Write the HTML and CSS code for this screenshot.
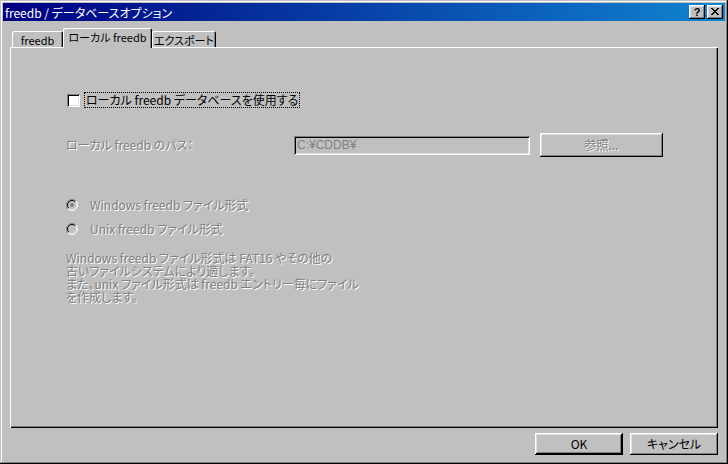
FILE: index.html
```html
<!DOCTYPE html>
<html lang="ja">
<head>
<meta charset="utf-8">
<title>freedb / データベースオプション</title>
<link rel="stylesheet" href="styles.css">
</head>
<body>
<div class="window">
  <div class="titlebar">
    <span class="title">freedb / データベースオプション</span>
    <div class="title-btns">
      <div class="tbtn help">?</div>
      <div class="tbtn">
        <svg width="8" height="7" viewBox="0 0 8 7" shape-rendering="crispEdges"><path fill="#000" d="M0 0h2v1H0z M6 0h2v1H6z M1 1h2v1H1z M5 1h2v1H5z M2 2h4v1H2z M3 3h2v1H3z M2 4h4v1H2z M1 5h2v1H1z M5 5h2v1H5z M0 6h2v1H0z M6 6h2v1H6z"/></svg>
      </div>
    </div>
  </div>
  <div class="body">
    <div class="tabs">
      <div class="tab t1">freedb</div>
      <div class="tab active t2">ローカル freedb</div>
      <div class="tab t3">エクスポート</div>
    </div>
    <div class="panel">
      <div class="row check-row">
        <span class="checkbox"></span>
        <span class="focus-label">ローカル freedb データベースを使用する</span>
      </div>
      <div class="row path-row">
        <span class="path-label disabled">ローカル freedb のパス：</span>
        <span class="edit">C:¥CDDB¥</span>
        <span class="btn browse"><span class="disabled">参照...</span></span>
      </div>
      <div class="row radio-row r1">
        <svg class="radio" width="12" height="12" viewBox="0 0 12 12">
          <circle cx="6" cy="6" r="4.5" fill="#c0c0c0"/>
          <path d="M2.1 9.9A5.5 5.5 0 0 1 9.9 2.1" fill="none" stroke="#808080"/>
          <path d="M9.9 2.1A5.5 5.5 0 0 1 2.1 9.9" fill="none" stroke="#fff"/>
          <path d="M2.8 9.2A4.5 4.5 0 0 1 9.2 2.8" fill="none" stroke="#000"/>
          <path d="M9.2 2.8A4.5 4.5 0 0 1 2.8 9.2" fill="none" stroke="#dfdfdf"/>
          <circle cx="6" cy="6" r="2" fill="#808080"/>
        </svg>
        <span class="radio-label disabled">Windows freedb ファイル形式</span>
      </div>
      <div class="row radio-row r2">
        <svg class="radio" width="12" height="12" viewBox="0 0 12 12">
          <circle cx="6" cy="6" r="4.5" fill="#c0c0c0"/>
          <path d="M2.1 9.9A5.5 5.5 0 0 1 9.9 2.1" fill="none" stroke="#808080"/>
          <path d="M9.9 2.1A5.5 5.5 0 0 1 2.1 9.9" fill="none" stroke="#fff"/>
          <path d="M2.8 9.2A4.5 4.5 0 0 1 9.2 2.8" fill="none" stroke="#000"/>
          <path d="M9.2 2.8A4.5 4.5 0 0 1 2.8 9.2" fill="none" stroke="#dfdfdf"/>
        </svg>
        <span class="radio-label disabled">Unix freedb ファイル形式</span>
      </div>
      <div class="desc disabled">
        <div class="line">Windows freedb ファイル形式は FAT16 やその他の</div>
        <div class="line">古いファイルシステムにより適します。</div>
        <div class="line">また、unix ファイル形式は freedb エントリー毎にファイル</div>
        <div class="line">を作成します。</div>
      </div>
    </div>
    <div class="buttons">
      <div class="btn default">OK</div>
      <div class="btn">キャンセル</div>
    </div>
  </div>
</div>
</body>
</html>
```
FILE: styles.css
```css
* { box-sizing: border-box; }
html, body {
  margin: 0;
  padding: 0;
  background: #c0c0c0;
}
body {
  font-family: "MS UI Gothic", "Noto Sans CJK JP", sans-serif;
  font-size: 12px;
  font-feature-settings: "palt";
  color: #000;
}
.window {
  width: 728px;
  height: 464px;
  padding: 3px;
  background: #c0c0c0;
  box-shadow: inset -1px -1px #000, inset 1px 1px #c0c0c0, inset -2px -2px #808080, inset 2px 2px #fff;
  display: flex;
  flex-direction: column;
}
.titlebar {
  height: 18px;
  background: linear-gradient(to right, #000080, #1084d0);
  display: flex;
  align-items: center;
  justify-content: space-between;
  padding: 0 2px 0 2px;
}
.title {
  color: #fff;
  line-height: 18px;
  white-space: nowrap;
  padding-top: 1px;
}
.title-btns {
  display: flex;
  gap: 2px;
}
.tbtn {
  width: 16px;
  height: 14px;
  background: #c0c0c0;
  box-shadow: inset -1px -1px #000, inset 1px 1px #fff, inset -2px -2px #808080, inset 2px 2px #dfdfdf;
  display: flex;
  align-items: center;
  justify-content: center;
  padding: 0 1px 1px 0;
}
.tbtn.help {
  font-family: "Liberation Sans", Arial, sans-serif;
  font-weight: bold;
  font-size: 11px;
  line-height: 13px;
  padding: 0;
}
.body {
  flex: 1;
  padding: 7px 7px 6px 7px;
  display: flex;
  flex-direction: column;
}
.tabs {
  height: 19px;
  display: flex;
  align-items: flex-end;
  padding-left: 2px;
}
.tab {
  flex: none;
  height: 16px;
  background: #c0c0c0;
  border-radius: 2px 2px 0 0;
  box-shadow: inset 1px 1px #fff, inset -1px 0 #000, inset -2px 0 #808080;
  display: flex;
  align-items: center;
  justify-content: center;
  white-space: nowrap;
  font-size: 11px;
  line-height: 14px;
  padding-top: 1px;
  overflow: hidden;
}
.t1 { width: 51px; }
.t2 { width: 89px; }
.t3 { width: 64px; }
.tab.active {
  height: 20px;
  margin-bottom: -1px;
  position: relative;
  z-index: 1;
  padding-bottom: 4px;
}
.panel {
  width: 708px;
  height: 381px;
  background: #c0c0c0;
  box-shadow: inset 1px 1px #fff, inset -1px -1px #000, inset -2px -2px #808080;
  padding-left: 56px;
  padding-top: 45px;
}
.row {
  display: flex;
  align-items: center;
  white-space: nowrap;
}
.disabled {
  color: #808080;
  text-shadow: 1px 1px 0 #fff;
}
.check-row {
  height: 16px;
  margin-left: 1px;
}
.checkbox {
  width: 13px;
  height: 13px;
  background: #fff;
  box-shadow: inset 1px 1px #808080, inset -1px -1px #fff, inset 2px 2px #000, inset -2px -2px #dfdfdf;
}
.focus-label {
  margin-left: 4px;
  height: 16px;
  line-height: 14px;
  padding: 0 2px;
  outline: 1px dotted #000;
  outline-offset: -1px;
  display: flex;
  align-items: center;
}
.path-row {
  height: 24px;
  margin-top: 25px;
}
.path-label {
  width: 228px;
  line-height: 14px;
}
.edit {
  width: 236px;
  height: 19px;
  padding: 1px 0 0 3px;
  color: #808080;
  line-height: 17px;
  font-family: "MS UI Gothic", "Liberation Sans", "Noto Sans CJK JP", sans-serif;
  box-shadow: inset 1px 1px #808080, inset -1px -1px #fff, inset 2px 2px #000, inset -2px -2px #dfdfdf;
}
.btn {
  background: #c0c0c0;
  box-shadow: inset -1px -1px #000, inset 1px 1px #fff, inset -2px -2px #808080, inset 2px 2px #dfdfdf;
  display: flex;
  align-items: center;
  justify-content: center;
  white-space: nowrap;
  line-height: 14px;
}
.browse {
  width: 123px;
  height: 24px;
  margin-left: 10px;
}
.radio-row {
  height: 16px;
}
.r1 { margin-top: 40px; }
.r2 { margin-top: 8px; }
.radio {
  display: block;
  flex: none;
}
.radio-label {
  margin-left: 12px;
  line-height: 14px;
}
.desc {
  margin-top: 14px;
  white-space: nowrap;
}
.desc .line {
  height: 13px;
  line-height: 13px;
}
.buttons {
  display: flex;
  justify-content: flex-end;
  gap: 7px;
  margin-top: 5px;
  width: 708px;
}
.buttons .btn {
  width: 88px;
  height: 22px;
}
.btn.default {
  box-shadow: inset -1px -1px #000, inset 1px 1px #fff, inset -2px -2px #000, inset 2px 2px #dfdfdf, inset -3px -3px #808080;
}
```
